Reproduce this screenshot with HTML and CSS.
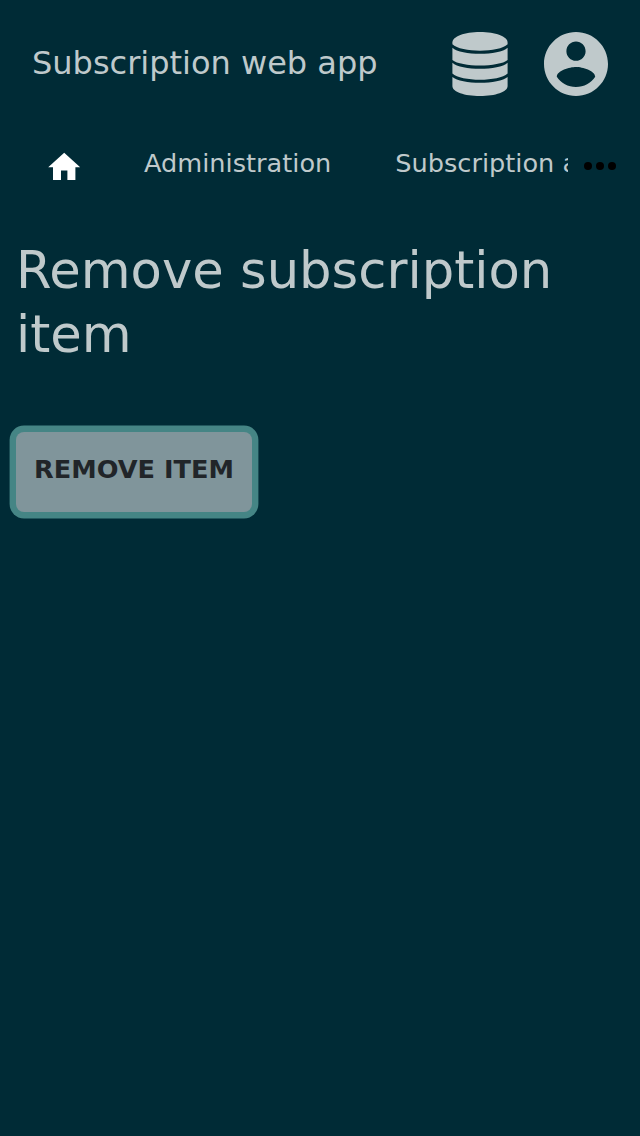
FILE: index.html
```html
<!DOCTYPE html>
<html lang="en">
<head>
<meta charset="utf-8">
<title>Subscription web app</title>
<link rel="stylesheet" href="styles.css">
</head>
<body>
<header class="topbar">
  <span class="brand">Subscription web app</span>
  <svg class="icon-db" viewBox="0 0 56 64" aria-hidden="true">
    <path d="M.4 10.500C.4 4.500 12.500 0 28 0S55.600 4.500 55.600 10.500V12.300C47 20.800 9 20.800 .4 12.300Z"/>
    <path d="M.4 15.700C9 23.700 47 23.700 55.600 15.700V28C47 35.300 9 35.300 .4 28Z"/>
    <path d="M.4 30.700C9 38.700 47 38.700 55.600 30.700V41.500C47 49.800 9 49.800 .4 41.500Z"/>
    <path d="M.4 45C9 52.700 47 52.700 55.600 45V54C55.600 60 43.500 64 28 64S.4 60 .4 54Z"/>
  </svg>
  <svg class="icon-user" viewBox="2 2 20 20" aria-hidden="true">
    <path d="M12 2C6.480 2 2 6.480 2 12s4.480 10 10 10 10-4.480 10-10S17.520 2 12 2zm0 3c1.660 0 3 1.340 3 3s-1.340 3-3 3-3-1.340-3-3 1.340-3 3-3zm0 14.200c-2.500 0-4.710-1.280-6-3.220.030-1.990 4-3.080 6-3.080 1.990 0 5.970 1.090 6 3.080-1.290 1.940-3.500 3.220-6 3.220z"/>
  </svg>
</header>
<nav class="tabs">
  <div class="tab-list">
    <a class="tab tab-home" aria-label="Home"><svg class="icon-home" viewBox="0 0 24 24"><path d="M10 20v-6h4v6h5v-8h3L12 3 2 12h3v8z"/></svg></a>
    <a class="tab">Administration</a>
    <a class="tab">Subscription administration</a>
  </div>
  <svg class="icon-more" viewBox="0 0 32 8" aria-label="More"><circle cx="4" cy="4" r="4"/><circle cx="16" cy="4" r="4"/><circle cx="28" cy="4" r="4"/></svg>
</nav>
<main class="content">
  <h1 class="title">Remove subscription item</h1>
  <button class="remove">REMOVE ITEM</button>
</main>
</body>
</html>
```

FILE: styles.css
```css
body {
  margin: 0;
  min-height: 1136px;
  background: #002b36;
  color: #bfc9cb;
  font-family: "DejaVu Sans", sans-serif;
}
.topbar {
  display: flex;
  align-items: center;
  height: 128px;
  padding: 0 32px;
}
.brand { flex: 1; padding-bottom: 2px; font-size: 32px; line-height: 40px; }
.icon-db { width: 56px; height: 64px; margin-right: 36px; fill: currentColor; }
.icon-user { width: 64px; height: 64px; fill: currentColor; }
.tabs { display: flex; height: 72px; }
.tab-list { display: flex; width: 568px; overflow: hidden; }
.tab {
  flex: none;
  padding: 0 32px;
  font-size: 25.6px;
  line-height: 70px;
  white-space: nowrap;
}
.tab-home { padding: 19.700px 32px 0 44.800px; height: 52px; line-height: 0; }
.tab-home + .tab { padding-left: 28.800px; }
.icon-home { width: 38.400px; height: 38.400px; fill: #fff; }
.icon-more { width: 32px; height: 8px; margin: 34px 0 0 16px; fill: #000; }
.content { padding: 38px 16px 0; }
.title { margin: 0; font-size: 51.2px; line-height: 64px; font-weight: 400; }
.remove {
  display: block;
  width: 236px;
  height: 80px;
  margin-top: 66px;
  padding: 0 0 6px;
  border: 0;
  border-radius: 8px;
  background: #80959b;
  box-shadow: 0 0 0 6.400px #458585;
  color: #212529;
  font: bold 25.6px "DejaVu Sans", sans-serif;
}
```
